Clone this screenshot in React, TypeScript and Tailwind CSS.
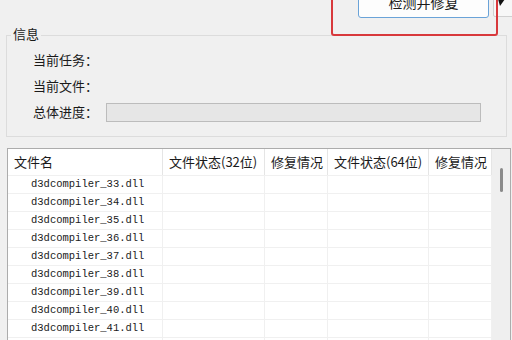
import React from 'react'

const COLS = [
  { label: '文件名', w: 'w-[155px]' },
  { label: '文件状态(32位)', w: 'w-[102px]' },
  { label: '修复情况', w: 'w-[63px]' },
  { label: '文件状态(64位)', w: 'w-[101px]' },
  { label: '修复情况', w: 'w-[63px]' },
]

const FILES = Array.from({ length: 11 }, (_, i) => `d3dcompiler_${33 + i}.dll`)

const cjk = { fontFamily: '"Noto Sans CJK SC", "Noto Sans", sans-serif' }

export default function App() {
  return (
    <div className="relative w-[512px] h-[340px] overflow-hidden bg-[#f0f0f0] text-[#1a1a1a]" style={cjk}>
      {/* Toolbar */}
      <div className="flex h-[20px] justify-end pr-0">
        <button className="-mt-[14px] h-[32px] w-[131px] rounded-[3px] border border-[#6aa3d8] bg-[#fdfdfd] text-[14px] leading-none">
          检测并修复
        </button>
        <div className="ml-[4px] -mt-[4px] h-[21px] w-[21px] -mr-[2px] rounded-[2px] border border-[#d0d0d0] bg-[#f7f7f7]" />
      </div>

      {/* red annotation frame */}
      <div className="absolute left-[331px] top-[-6px] h-[42px] w-[167px] rounded-[3px] border-2 border-[#d8383c]" />
      <svg className="absolute left-[497px] top-[-1px]" width="9" height="8" viewBox="0 0 9 8">
        <path d="M1 0 L8 0 L3 7 Z" fill="#111" />
      </svg>

      {/* Group box */}
      <div className="ml-[6px] mt-[15px] h-[102px] w-[501px] border border-[#dcdcdc]">
        <div className="-mt-[9px] ml-[4px] w-fit bg-[#f0f0f0] px-[2px] text-[13px] leading-[14px]">信息</div>
        <div className="mt-[6px] flex flex-col pl-[26px] text-[13px]">
          <div className="flex h-[26px] items-center">当前任务：</div>
          <div className="flex h-[26px] items-center">当前文件：</div>
          <div className="flex h-[26px] items-center">
            <span className="w-[73px]">总体进度：</span>
            <div className="h-[19px] w-[375px] border border-[#bcbcbc] bg-[#e6e6e6]" />
          </div>
        </div>
      </div>

      {/* Table */}
      <div className="ml-[7px] mt-[11px] w-[504px] border border-[#acacac] bg-white">
        <div className="flex">
          <div className="flex-1">
            <div className="flex h-[26px]">
              {COLS.map((c, i) => (
                <div key={i} className={`${c.w} flex items-center border-r border-[#e5e5e5] pl-[6px] text-[13px]`}>
                  {c.label}
                </div>
              ))}
            </div>
            {FILES.map(f => (
              <div key={f} className="flex h-[18px] border-t border-[#f0f0f0]">
                {COLS.map((c, i) => (
                  <div key={i} className={`${c.w} flex items-center border-r border-[#f0f0f0]`}>
                    {i === 0 && (
                      <span className="pl-[23px] text-[10.5px]" style={{ fontFamily: '"Liberation Mono", monospace' }}>
                        {f}
                      </span>
                    )}
                  </div>
                ))}
              </div>
            ))}
          </div>
          <div className="w-[18px] bg-[#efefef] pt-[19px] pl-[8px]">
            <div className="h-[24px] w-[3px] rounded-full bg-[#8a8a8a]" />
          </div>
        </div>
      </div>
    </div>
  )
}
